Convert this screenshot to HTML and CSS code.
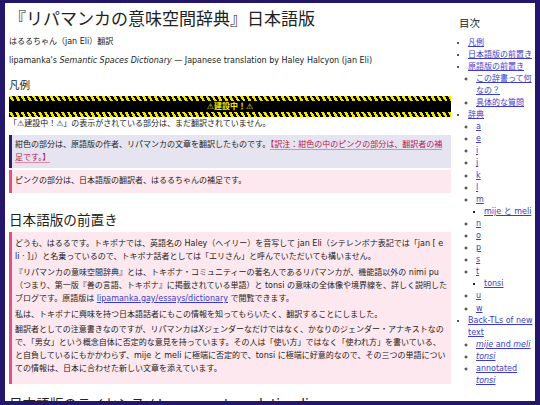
FILE: index.html
```html
<!DOCTYPE html>
<html lang="ja">
<head>
<meta charset="utf-8">
<title>リパマンカの意味空間辞典 日本語版</title>
<link rel="stylesheet" href="styles.css">
</head>
<body>
<div class="page">
  <main class="main">
    <h1 class="title">『リパマンカの意味空間辞典』日本語版</h1>
    <p class="byline">はるるちゃん（jan Eli）翻訳</p>
    <p class="byline-en">lipamanka's <em>Semantic Spaces Dictionary</em> — Japanese translation by Haley Halcyon (jan Eli)</p>

    <h3 class="h3">凡例</h3>
    <div class="banner"><span>⚠建設中！⚠</span></div>
    <p class="note">「⚠建設中！⚠」の表示がされている部分は、まだ翻訳されていません。</p>

    <div class="box navy">
      <p>紺色の部分は、原語版の作者、リパマンカの文章を翻訳したものです。<span class="tl">【訳注：紺色の中のピンクの部分は、翻訳者の補足です。】</span></p>
    </div>
    <div class="box pink single">
      <p>ピンクの部分は、日本語版の翻訳者、はるるちゃんの補足です。</p>
    </div>

    <h2 class="h2">日本語版の前置き</h2>
    <div class="box pink long">
      <p>どうも、はるるです。トキポナでは、英語名の Haley（ヘイリー）を音写して jan Eli（シテレンボナ表記では「jan [ e li · ]」）と名乗っているので、トキポナ話者としては「エリさん」と呼んでいただいても構いません。</p>
      <p>『リパマンカの意味空間辞典』とは、トキポナ・コミュニティーの著名人であるリパマンカが、機能語以外の nimi pu（つまり、第一版『善の言語、トキポナ』に掲載されている単語）と tonsi の意味の全体像や境界線を、詳しく説明したブログです。原語版は <a href="#">lipamanka.gay/essays/dictionary</a> で閲覧できます。</p>
      <p>私は、トキポナに興味を持つ日本語話者にもこの情報を知ってもらいたく、翻訳することにしました。</p>
      <p>翻訳者としての注意書きなのですが、リパマンカはXジェンダーなだけではなく、かなりのジェンダー・アナキストなので、「男女」という概念自体に否定的な意見を持っています。その人は「使い方」ではなく「使われ方」を書いている、と自負しているにもかかわらず、mije と meli に極端に否定的で、tonsi に極端に好意的なので、その三つの単語についての情報は、日本に合わせた新しい文章を添えています。</p>
    </div>

    <h2 class="h2 license">日本語版のライセンス / Japanese translation license</h2>
  </main>

  <nav class="toc">
    <h3 class="toc-title">目次</h3>
    <ul class="l1">
      <li><a href="#">凡例</a></li>
      <li><a href="#">日本語版の前置き</a></li>
      <li><a href="#">原語版の前置き</a>
        <ul class="l2">
          <li><a href="#">この辞書って何なの？</a></li>
          <li><a href="#">具体的な質問</a></li>
        </ul>
      </li>
      <li><a href="#">辞典</a>
        <ul class="l2">
          <li><a href="#">a</a></li>
          <li><a href="#">e</a></li>
          <li><a href="#">i</a></li>
          <li><a href="#">j</a></li>
          <li><a href="#">k</a></li>
          <li><a href="#">l</a></li>
          <li><a href="#">m</a>
            <ul class="l3"><li><a href="#">mije と meli</a></li></ul>
          </li>
          <li><a href="#">n</a></li>
          <li><a href="#">o</a></li>
          <li><a href="#">p</a></li>
          <li><a href="#">s</a></li>
          <li><a href="#">t</a>
            <ul class="l3"><li><a href="#">tonsi</a></li></ul>
          </li>
          <li><a href="#">u</a></li>
          <li><a href="#">w</a></li>
        </ul>
      </li>
      <li><a href="#">Back-TLs of new text</a>
        <ul class="l2">
          <li><a href="#"><em>mije</em> and <em>meli</em></a></li>
          <li><a href="#"><em>tonsi</em></a></li>
          <li><a href="#">annotated <em>tonsi</em></a></li>
        </ul>
      </li>
    </ul>
  </nav>
</div>
</body>
</html>
```

FILE: styles.css
```css
html {
  background: #24166b;
  height: 100%;
}

body {
  margin: 3px 5px 0 5px;
  height: 398px;
  overflow: hidden;
  background: #ffffff;
  color: #222222;
  font-family: "DejaVu Sans", "Noto Sans CJK JP", sans-serif;
  font-size: 8px;
  line-height: 12px;
}

.page {
  display: grid;
  grid-template-columns: 442px 84px;
  padding-left: 4px;
}

.main {
  padding-top: 5px;
}

p {
  margin: 0;
}

a {
  color: #3b3bcf;
  text-decoration: underline;
}

.title {
  margin: 0;
  font-size: 17px;
  line-height: 22px;
  font-weight: normal;
}

.byline {
  margin-top: 6px;
}

.byline-en {
  margin-top: 7px;
}

.h3 {
  margin: 11px 0 0;
  font-size: 10.5px;
  line-height: 14px;
  font-weight: normal;
}

.banner {
  margin-top: 4px;
  height: 21px;
  display: flex;
  align-items: center;
  justify-content: center;
  background:
    repeating-linear-gradient(60deg, #000 0 2.5px, #f2e500 2.5px 5px) top / 100% 5px no-repeat,
    repeating-linear-gradient(60deg, #000 0 2.5px, #f2e500 2.5px 5px) bottom / 100% 5px no-repeat,
    #000;
  color: #f2e500;
  font-weight: bold;
  font-size: 8px;
}

.note {
  line-height: 12px;
  padding-top: 0.5px;
}

.box {
  border-left: 3px solid;
  padding: 4px 3px 4px 3px;
}

.box p {
  line-height: 12.5px;
}

.navy {
  margin-top: 5.5px;
  background: #e6e4f0;
  border-color: #2a1e6e;
}

.tl {
  color: #b3204f;
  border-bottom: 1px solid #e48aa6;
}

.pink {
  background: #fde8ef;
  border-color: #e0508a;
}

.single {
  margin-top: 2px;
  padding-top: 5px;
  padding-bottom: 5.5px;
}

.h2 {
  margin: 18px 0 0;
  font-size: 13.6px;
  line-height: 18px;
  font-weight: normal;
}

.long {
  margin-top: 3px;
  padding-top: 5px;
  padding-bottom: 8.5px;
}

.long p {
  line-height: 13px;
}

.long p + p {
  margin-top: 2.8px;
}

.license {
  margin-top: 11px;
}

.toc {
  padding-left: 8px;
  padding-top: 13px;
}

.toc-title {
  margin: 0;
  font-size: 10.5px;
  line-height: 14px;
  font-weight: normal;
}

.toc ul {
  margin: 0;
  padding: 0;
  line-height: 12.1px;
}

.l1 {
  padding-left: 9px !important;
}

.l1 > li {
  list-style: disc;
}

.l2 {
  padding-left: 8px !important;
}

.l2 > li {
  list-style: circle;
}

.l3 {
  padding-left: 8px !important;
}

.l3 > li {
  list-style: square;
}

.toc-title + .l1 {
  margin-top: 6.5px;
}
```
